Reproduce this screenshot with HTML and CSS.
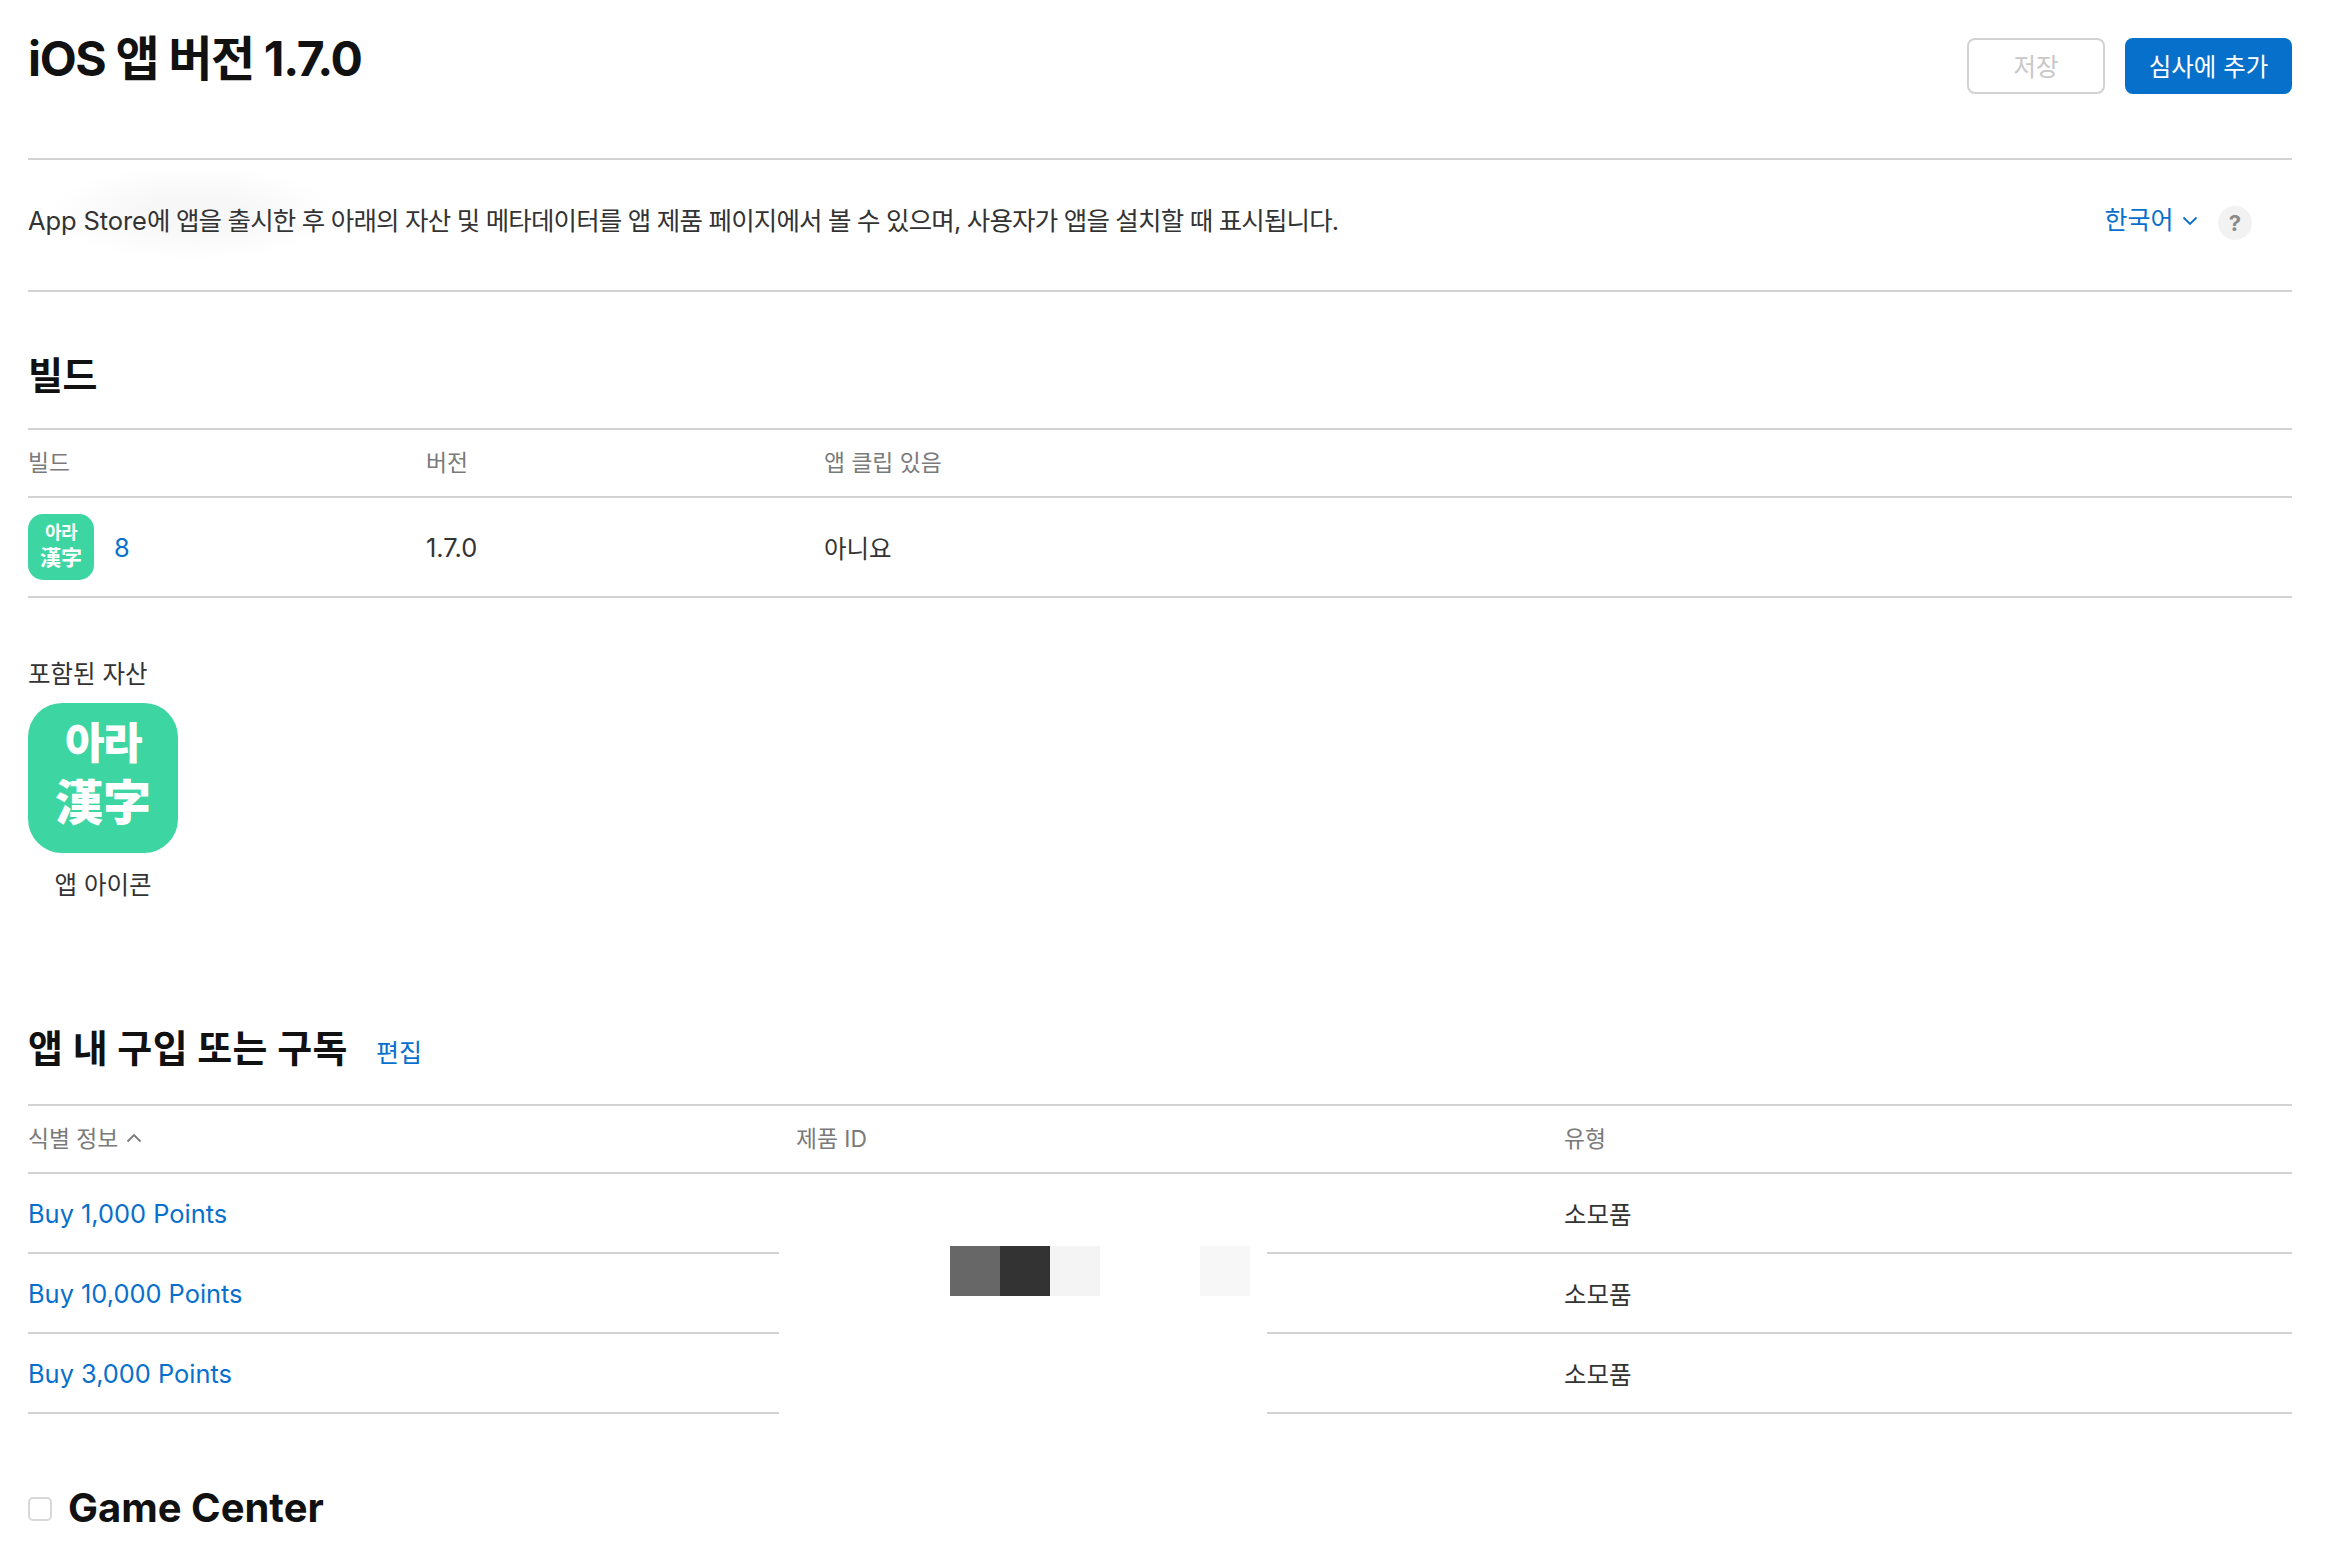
FILE: index.html
```html
<!DOCTYPE html>
<html lang="ko">
<head>
<meta charset="utf-8">
<title>iOS 앱 버전 1.7.0</title>
<link rel="stylesheet" href="styles.css">
</head>
<body>
<main class="page">
  <header class="top">
    <h1 class="title">iOS 앱 버전 1.7.0</h1>
    <div class="actions">
      <button class="btn btn-save" type="button">저장</button>
      <button class="btn btn-primary" type="button">심사에 추가</button>
    </div>
  </header>

  <section class="intro">
    <div class="smudge"></div>
    <p class="intro-text"><span class="latin">App Store</span>에 앱을 출시한 후 아래의 자산 및 메타데이터를 앱 제품 페이지에서 볼 수 있으며, 사용자가 앱을 설치할 때 표시됩니다.</p>
    <div class="lang">
      <a class="link lang-link">한국어
        <svg class="chev" viewBox="0 0 16 10" width="16" height="10"><path d="M1.5 1.5 8 8l6.5-6.5" fill="none" stroke="currentColor" stroke-width="1.8"/></svg>
      </a>
      <span class="help">?</span>
    </div>
  </section>

  <h2 class="section-title build-title">빌드</h2>
  <div class="grid grid-build grid-head">
    <div>빌드</div><div>버전</div><div>앱 클립 있음</div>
  </div>
  <div class="grid grid-build build-row">
    <div class="build-cell">
      <div class="icon-small"><span class="ko">아라</span><span>漢字</span></div>
      <a class="link num">8</a>
    </div>
    <div class="num">1.7.0</div>
    <div>아니요</div>
  </div>

  <div class="assets">
    <div class="assets-label">포함된 자산</div>
    <figure class="asset">
      <div class="icon-large"><span class="ko">아라</span><span>漢字</span></div>
      <figcaption>앱 아이콘</figcaption>
    </figure>
  </div>

  <div class="iap-title">
    <h2 class="section-title iap-heading">앱 내 구입 또는 구독</h2>
    <a class="link edit">편집</a>
  </div>
  <div class="iap">
    <div class="grid grid-iap grid-head">
      <div class="sort">식별 정보
        <svg class="chev-up" viewBox="0 0 16 10" width="16" height="10"><path d="M1.5 8.5 8 2l6.5 6.5" fill="none" stroke="currentColor" stroke-width="1.8"/></svg>
      </div>
      <div>제품 ID</div><div>유형</div>
    </div>
    <div class="grid grid-iap iap-row"><a class="link num">Buy 1,000 Points</a><div></div><div>소모품</div></div>
    <div class="grid grid-iap iap-row"><a class="link num">Buy 10,000 Points</a><div></div><div>소모품</div></div>
    <div class="grid grid-iap iap-row"><a class="link num">Buy 3,000 Points</a><div></div><div>소모품</div></div>
    <div class="redact">
      <div class="mosaic">
        <i class="m1"></i><i class="m2"></i><i class="m3"></i><i></i><i></i><i class="m4"></i>
      </div>
    </div>
  </div>

  <div class="gc">
    <span class="checkbox"></span>
    <h2 class="section-title gc-title">Game Center</h2>
  </div>
</main>
</body>
</html>
```
FILE: styles.css
```css
* { box-sizing: border-box; }
html, body { margin: 0; background: #fff; }
body {
  font-family: Inter, "Noto Sans CJK KR", "Noto Sans", sans-serif;
  font-size: 24.5px;
  color: #333;
  height: 1546px;
  overflow: hidden;
}
.page { width: 2264px; margin-left: 28px; }
.link { color: #0870cc; text-decoration: none; }
.num { font-size: 25.4px; }

.top {
  height: 160px;
  border-bottom: 2px solid #d2d2d2;
  display: flex;
  justify-content: space-between;
  align-items: flex-start;
}
.title {
  margin: 24px 0 0;
  font-size: 48px;
  line-height: 70px;
  font-weight: 700;
  letter-spacing: -1.35px;
  color: #111;
}
.actions { display: flex; gap: 20px; margin-top: 38px; }
.btn {
  height: 56px;
  border-radius: 8px;
  font: inherit;
  font-size: 24.5px;
  padding: 0 0 2px;
}
.btn-save { width: 138px; background: #fff; border: 2px solid #d2d2d2; color: #c8c8c8; }
.btn-primary { width: 167px; background: #0670cb; border: 0; color: #fff; }

.intro {
  position: relative;
  height: 132px;
  padding-bottom: 14px;
  border-bottom: 2px solid #d2d2d2;
  display: flex;
  justify-content: space-between;
  align-items: center;
}
.smudge {
  position: absolute;
  left: 20px; top: 6px;
  width: 290px; height: 94px;
  background: radial-gradient(closest-side, #f7f7f7 35%, #fff 100%);
}
.intro-text { position: relative; margin: 0; font-size: 25.5px; letter-spacing: -0.82px; color: #333; }
.latin { letter-spacing: -0.1px; }
.lang { display: flex; align-items: center; padding-right: 40px; }
.lang-link { display: flex; align-items: center; gap: 8.5px; font-size: 25px; margin-right: 20px; }
.chev { margin-top: 5px; }
.help {
  width: 34px; height: 34px; border-radius: 50%;
  background: #f2f2f2; color: #8a8a8a;
  font-size: 22px; font-weight: 700;
  display: flex; align-items: center; justify-content: center;
  margin-top: 10px;
}

.section-title { margin: 0; font-size: 38px; font-weight: 700; color: #111; letter-spacing: -0.4px; }
.build-title { height: 138px; line-height: 52px; padding-top: 57px; border-bottom: 2px solid #d2d2d2; }

.grid { display: grid; align-items: center; border-bottom: 2px solid #d2d2d2; }
.grid-build { grid-template-columns: 398px 398px 1fr; }
.grid-iap { grid-template-columns: 768px 768px 1fr; }
.grid-head { height: 68px; padding-bottom: 3px; font-size: 22.8px; color: #7a7a7a; }
.build-row { height: 100px; }
.build-cell { display: flex; align-items: center; gap: 20px; }

.icon-small, .icon-large {
  background: #3dd6a3;
  color: #fff;
  display: flex;
  flex-direction: column;
  align-items: center;
  justify-content: center;
}
.icon-small { width: 66px; height: 66px; border-radius: 15px; font-size: 21px; font-weight: 700; line-height: 25px; padding-bottom: 4px; }
.icon-small .ko { font-size: 18px; letter-spacing: -0.6px; }
.icon-large { width: 150px; height: 150px; border-radius: 34px; font-size: 48px; font-weight: 900; line-height: 60px; padding-bottom: 10px; }
.icon-large .ko { font-size: 43px; letter-spacing: -1.5px; }

.assets { padding-top: 58px; height: 506px; }
.assets-label { line-height: 36px; }
.asset { margin: 11px 0 0; width: 150px; }
.asset figcaption { text-align: center; line-height: 36px; margin-top: 14px; white-space: nowrap; }

.iap-title { display: flex; align-items: baseline; gap: 28px; margin-top: -86px; height: 86px; }
.iap-heading { letter-spacing: 0.35px; }
.edit { font-size: 25px; }

.iap { position: relative; border-top: 2px solid #d2d2d2; }
.sort { display: flex; align-items: center; gap: 8px; }
.iap-row { height: 80px; }
.redact {
  position: absolute;
  left: 751px; top: 68px;
  width: 488px; height: 246px;
  background: #fff;
  padding-left: 171px;
  padding-top: 72px;
}
.mosaic { display: flex; height: 50px; width: 300px; }
.mosaic i { flex: none; width: 50px; height: 50px; display: block; }
.m1 { background: #676767; }
.m2 { background: #333; }
.m3 { background: #f4f4f4; }
.m4 { background: #f7f7f7; }

.gc { display: flex; align-items: center; gap: 16px; margin-top: 69px; }
.checkbox { width: 24px; height: 24px; border: 2px solid #d8d8d8; border-radius: 5px; background: #fff; margin-top: 2px; }
.gc-title { font-size: 40px; letter-spacing: 0; }
```
